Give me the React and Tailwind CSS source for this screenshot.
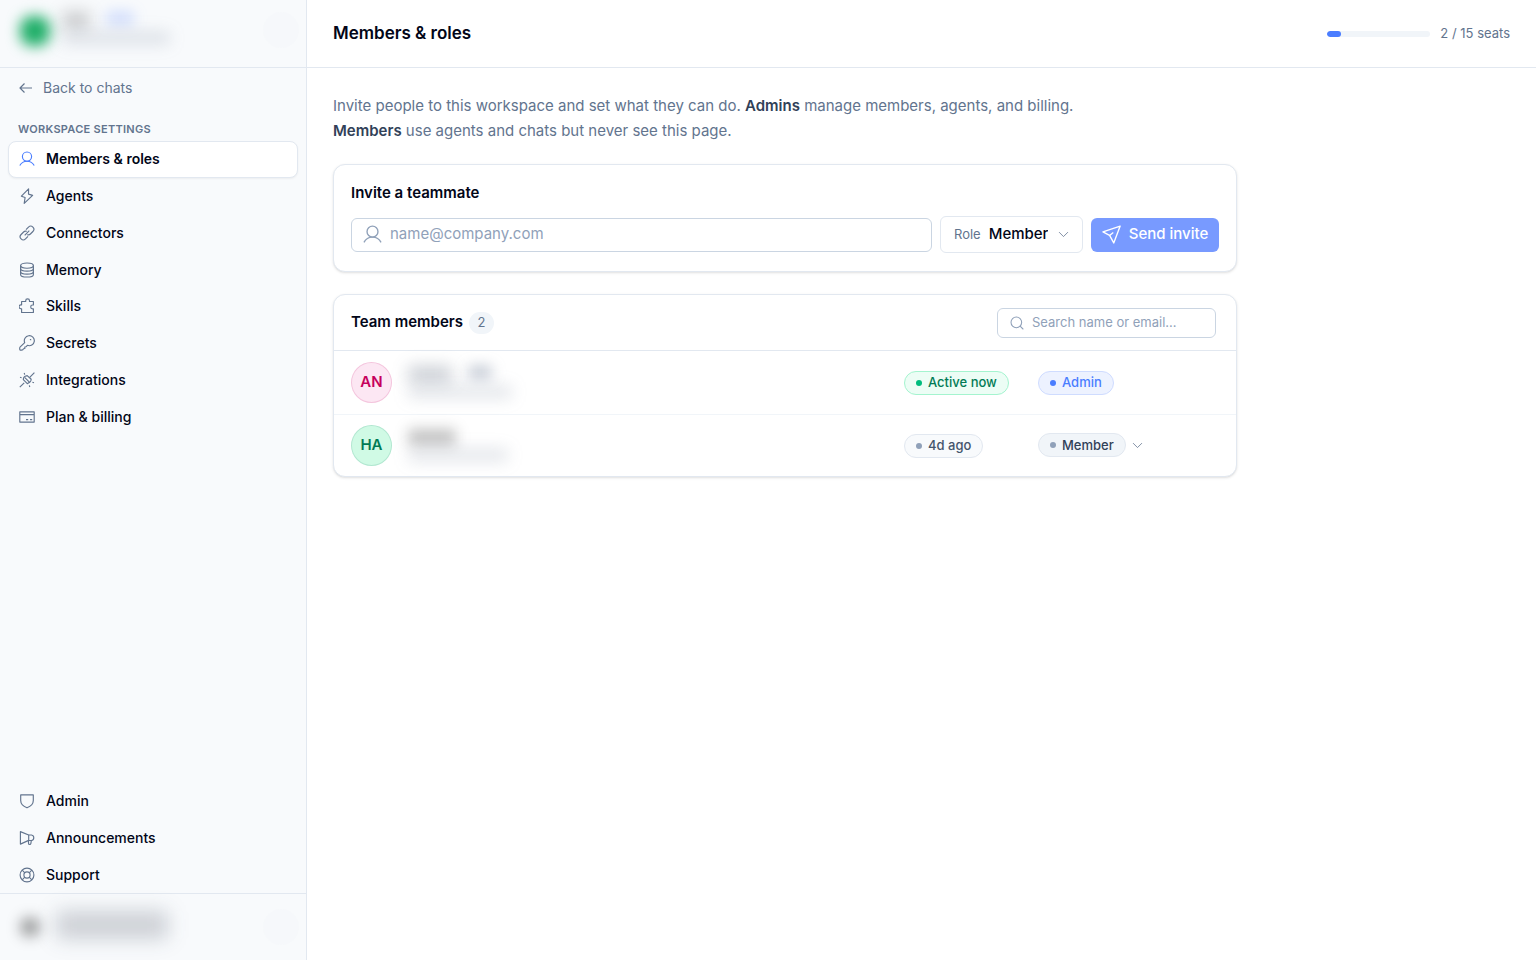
import { Search } from 'lucide-react';

function Icon({ children, className = 'size-4', strokeWidth = 1.15 }) {
  return (
    <svg
      viewBox="0 0 16 16"
      fill="none"
      stroke="currentColor"
      strokeWidth={strokeWidth}
      strokeLinejoin="round"
      aria-hidden="true"
      className={`shrink-0 ${className}`}
    >
      {children}
    </svg>
  );
}

const paths = {
  person: (
    <>
      <circle cx="8" cy="5.6" r="4.6" />
      <path d="M.8 14.600c1.400-2.800 4-4.400 7.200-4.400s5.800 1.600 7.200 4.400" />
    </>
  ),
  bolt: <path d="M9.600.8 2.400 8.200l3.700 1.300L5.200 15.400 13.600 7.400 9.500 6.100 9.600.8Z" />,
  link: (
    <>
      <path d="m7 4.600 2.500-2.500a3.100 3.100 0 0 1 4.400 4.400l-2.500 2.500c-.9.9-2.100 1-3.100.6" />
      <path d="M9 11.400l-2.500 2.500a3.100 3.100 0 0 1-4.400-4.400L4.600 7c.9-.9 2.100-1 3.100-.6" />
      <path d="m5.700 10.300 4.600-4.600" />
    </>
  ),
  database: (
    <>
      <ellipse cx="8" cy="3.600" rx="6.400" ry="2.600" />
      <path d="M1.600 3.600v8.800c0 1.400 2.800 2.600 6.400 2.600s6.400-1.200 6.400-2.600V3.600" />
      <path d="M1.600 6.500c0 1.400 2.800 2.600 6.400 2.600s6.400-1.200 6.400-2.600M1.600 9.500c0 1.400 2.800 2.600 6.400 2.600s6.400-1.200 6.400-2.600" />
    </>
  ),
  puzzle: (
    <path d="M2.600 14.500h11.800v-3.700h-.8a1.900 1.900 0 0 1 0-3.800h.8V3.500h-3.900v-.7a1.900 1.900 0 0 0-3.800 0v.7H2.600v3.300H2A1.900 1.900 0 0 0 2 10.700h.6v3.800Z" />
  ),
  key: (
    <>
      <path d="M5.700 7.600A5 5 0 1 1 8.400 10.300L6.900 11.800 5.800 12v1.500l-1.300.2-.8 1.200c-.4.400-2.500.3-2.800-.1s-.3-2.300.1-2.700L5.700 7.600Z" />
      <path d="M10.900 4.500h.8v.8" />
    </>
  ),
  integration: (
    <>
      <path d="m4.300 7.700 4 4 1.800-1.100a3.200 3.200 0 0 0 1.700-1.700l.4-1.700-4-3.600-2 .6a3.200 3.200 0 0 0-1.600 1.700l-.3 1.800Z" />
      <path d="m.8 15.200 4.400-4.400M5.600 5.400l5 5M10.700 5.300 15.400.6M5.700 2.600 5.200 1M2.600 5.700 1 5.200M10.300 13.400l.5 1.600M13.400 10.300l1.600.5" />
    </>
  ),
  card: <path d="M.8 2.900h14.400v10.200H.8zM.8 5.600h14.400M7 10.600h2.200M11 10.600h2.200" />,
  shield: <path d="M1.700 1.900h12.600v5.600c0 3.300-2.300 5.700-6.300 7.300-4-1.600-6.300-4-6.300-7.300V1.900Z" />,
  megaphone: (
    <>
      <path d="M1.400 1.600v12.500l8.300-3.700V5L1.400 1.600Z" />
      <path d="M9.700 5h2.800a2.800 2.800 0 0 1 0 5.500H9.700M9.500 10.600v2.600c0 .8.500 1.300 1.200 1.300s1.100-.5 1.200-1.200l.4-2.800" />
    </>
  ),
  lifebuoy: (
    <>
      <circle cx="8" cy="8" r="6.900" />
      <circle cx="8" cy="8" r="3.100" />
      <path d="m3.200 3.200 2.600 2.600m4.400 4.400 2.600 2.600m0-9.600-2.600 2.600m-4.400 4.400-2.600 2.600" />
    </>
  ),
  back: <path d="M14 8H2M6.500 3.500 2 8l4.500 4.500" />,
  chevron: <path d="m1.500 4.500 6.500 6.500 6.500-6.500" />,
  send: (
    <>
      <path d="M15.300.9.8 5.800l5.600 3 3.500 6.300L15.300.9Z" />
      <path d="m6.400 8.800 3.100-2.500" />
    </>
  ),
};

const settingsNav = [
  { label: 'Members & roles', icon: 'person', active: true },
  { label: 'Agents', icon: 'bolt' },
  { label: 'Connectors', icon: 'link' },
  { label: 'Memory', icon: 'database' },
  { label: 'Skills', icon: 'puzzle' },
  { label: 'Secrets', icon: 'key' },
  { label: 'Integrations', icon: 'integration' },
  { label: 'Plan & billing', icon: 'card' },
];

const footerNav = [
  { label: 'Admin', icon: 'shield' },
  { label: 'Announcements', icon: 'megaphone' },
  { label: 'Support', icon: 'lifebuoy' },
];

function NavItem({ label, icon, active }) {
  return (
    <li className="flex">
      <a
        href="#"
        aria-current={active ? 'page' : undefined}
        className={`flex flex-1 items-center gap-[11px] rounded-lg border px-[10px] text-sm text-slate-950 ${
          active
            ? 'border-slate-200 bg-white font-semibold shadow-xs'
            : 'border-transparent font-medium'
        }`}
      >
        <Icon className={active ? 'size-4 text-[#4a7dff]' : 'size-4 text-slate-500'}>{paths[icon]}</Icon>
        {label}
      </a>
    </li>
  );
}

function Sidebar() {
  return (
    <aside className="flex w-[307px] shrink-0 flex-col border-r border-slate-200 bg-slate-50">
      <div className="flex h-17 shrink-0 items-start justify-between overflow-hidden border-b border-slate-200 pt-3 pr-[7px] pl-5">
        <div className="flex gap-3">
          <div className="mt-1 size-[30px] rounded-xl bg-[#1fae68] blur-[7px]" />
          <div className="space-y-1">
            <div className="flex gap-4">
              <div className="h-4 w-7 rounded bg-neutral-950/20 blur-[8px]" />
              <div className="h-3 w-7 rounded bg-[#4a7dff]/25 blur-[7px]" />
            </div>
            <div className="h-3 w-27 rounded bg-slate-500/20 blur-[8px]" />
          </div>
        </div>
        <div className="size-9 rounded-full bg-slate-100/30" />
      </div>

      <a href="#" className="mt-2 flex h-6 items-center gap-[9px] px-[18px] text-sm text-slate-500">
        <Icon>{paths.back}</Icon>
        Back to chats
      </a>

      <nav aria-label="Workspace settings" className="mt-5 px-2">
        <h2 className="px-[10px] text-[11px] leading-[18px] font-semibold tracking-wide text-slate-500 uppercase">
          Workspace settings
        </h2>
        <ul className="mt-[3px] grid h-[294px] grid-rows-8">
          {settingsNav.map((item) => (
            <NavItem key={item.label} {...item} />
          ))}
        </ul>
      </nav>

      <ul className="mt-auto grid h-[110px] grid-rows-3 px-2">
        {footerNav.map((item) => (
          <NavItem key={item.label} {...item} />
        ))}
      </ul>

      <div className="flex h-[67px] shrink-0 items-center justify-between border-t border-slate-200 pr-[7px] pl-5">
        <div className="flex items-center gap-4">
          <div className="size-5 rounded-full bg-neutral-950/40 blur-[7px]" />
          <div className="mb-1 h-7 w-28 rounded bg-slate-800/20 blur-[10px]" />
        </div>
        <div className="size-9 rounded-full bg-slate-100/30" />
      </div>
    </aside>
  );
}

function Pill({ className, dot, children }) {
  return (
    <span
      className={`inline-flex h-6 items-center gap-[6px] rounded-full border px-[11px] align-middle text-[13px] font-medium ${className}`}
    >
      <span className={`size-[6px] rounded-full ${dot}`} />
      {children}
    </span>
  );
}

function InviteCard() {
  return (
    <section className="rounded-xl border border-slate-200 bg-white px-[17px] pt-4 pb-[18px] shadow-sm">
      <h2 className="text-[15px] leading-6 font-semibold text-slate-950">Invite a teammate</h2>
      <form className="mt-[11px] flex items-center gap-2" onSubmit={(e) => e.preventDefault()}>
        <label className="flex h-[34px] flex-1 items-center gap-2 rounded-md border border-slate-300 px-[11px] text-slate-400">
          <Icon className="size-[19px]">{paths.person}</Icon>
          <input
            type="email"
            aria-label="Email"
            placeholder="name@company.com"
            className="min-w-0 flex-1 bg-transparent text-[15px] text-slate-950 outline-none placeholder:text-slate-400"
          />
        </label>
        <label className="flex h-[37px] w-[143px] items-center rounded-md border border-slate-200 px-[13px] text-[13px] text-slate-500">
          Role
          <select className="ml-2 field-sizing-content appearance-none bg-transparent text-[15px] font-medium text-slate-950 outline-none">
            <option>Member</option>
          </select>
          <Icon className="ml-auto size-[11px]">{paths.chevron}</Icon>
        </label>
        <button
          type="submit"
          className="flex h-[34px] w-32 items-center justify-center gap-2 rounded-md bg-[#789aff] text-[15px] font-medium whitespace-nowrap text-white"
        >
          <Icon className="size-[19px]">{paths.send}</Icon>
          Send invite
        </button>
      </form>
    </section>
  );
}

function MembersCard() {
  return (
    <section className="mt-[22px] overflow-hidden rounded-xl border border-slate-200 bg-white shadow-sm">
      <header className="flex h-14 items-center border-b border-slate-200 pr-5 pl-[17px]">
        <h2 className="text-[15px] font-semibold text-slate-950">Team members</h2>
        <span className="ml-[6px] flex h-[22px] w-[25px] items-center justify-center rounded-full bg-slate-100 text-[13px] text-slate-500">
          2
        </span>
        <label className="ml-auto flex h-[30px] w-[219px] items-center gap-[7px] rounded-md border border-slate-300 px-[11px] text-slate-400">
          <Search className="size-4 shrink-0" strokeWidth={1.6} />
          <input
            type="search"
            aria-label="Search members"
            placeholder="Search name or email…"
            className="min-w-0 flex-1 bg-transparent text-[13px] text-slate-950 outline-none placeholder:text-slate-400"
          />
        </label>
      </header>
      <table aria-label="Team members" className="w-full table-fixed">
        <colgroup>
          <col />
          <col className="w-[134px]" />
          <col className="w-[198px]" />
        </colgroup>
        <tbody>
          <tr className="h-[63px] border-b border-slate-100">
            <td className="pl-[17px]">
              <div className="flex items-center gap-4">
                <span className="flex size-[41px] items-center justify-center rounded-full border border-pink-700/15 bg-pink-100 text-[15px] font-semibold text-pink-700">
                  AN
                </span>
                <div className="space-y-1">
                  <div className="flex gap-4">
                    <div className="h-4 w-11 rounded bg-slate-700/25 blur-[8px]" />
                    <div className="h-3 w-6 rounded bg-slate-500/40 blur-[7px]" />
                  </div>
                  <div className="h-3 w-26 rounded bg-slate-500/20 blur-[8px]" />
                </div>
              </div>
            </td>
            <td>
              <Pill className="border-emerald-200 bg-emerald-50 text-emerald-700" dot="bg-emerald-500">
                Active now
              </Pill>
            </td>
            <td>
              <Pill className="border-[#cfdcff] bg-[#edf2ff] text-[#4a7dff]" dot="bg-[#4a7dff]">
                Admin
              </Pill>
            </td>
          </tr>
          <tr className="h-[62px]">
            <td className="pl-[17px]">
              <div className="flex items-center gap-4">
                <span className="flex size-[41px] items-center justify-center rounded-full border border-emerald-700/15 bg-emerald-100 text-[15px] font-semibold text-emerald-700">
                  HA
                </span>
                <div className="space-y-1">
                  <div className="h-4 w-12 rounded bg-neutral-950/25 blur-[7px]" />
                  <div className="h-3 w-25 rounded bg-slate-500/20 blur-[8px]" />
                </div>
              </div>
            </td>
            <td>
              <Pill className="border-slate-200 bg-slate-50 text-slate-600" dot="bg-slate-400">
                4d ago
              </Pill>
            </td>
            <td>
              <label className="flex items-center gap-[6px] text-slate-500">
                <Pill className="border-slate-200 bg-slate-100 text-slate-700" dot="bg-slate-400">
                  <select aria-label="Role" className="field-sizing-content appearance-none bg-transparent outline-none">
                    <option>Member</option>
                  </select>
                </Pill>
                <Icon className="size-[11px]">{paths.chevron}</Icon>
              </label>
            </td>
          </tr>
        </tbody>
      </table>
    </section>
  );
}

export default function App() {
  return (
    <div className="flex min-h-screen bg-white font-[Inter,'Liberation_Sans',sans-serif] text-slate-950">
      <Sidebar />
      <main className="min-w-0 flex-1">
        <header className="flex h-17 items-center justify-between border-b border-slate-200 px-[26px]">
          <h1 className="text-[17px] font-semibold">Members &amp; roles</h1>
          <div className="flex items-center gap-[10px] text-[13px] text-slate-500">
            <div className="h-[6px] w-[103px] overflow-hidden rounded-full bg-slate-100">
              <div className="h-full rounded-full bg-[#4a7dff]" style={{ width: `${(2 / 15) * 100}%` }} />
            </div>
            2 / 15 seats
          </div>
        </header>
        <div className="max-w-[956px] px-[26px] pt-[25px]">
          <p className="mb-[21px] max-w-[770px] text-[15px] leading-[25px] text-slate-500">
            Invite people to this workspace and set what they can do.{' '}
            <strong className="font-semibold text-slate-700">Admins</strong> manage members, agents, and billing.{' '}
            <strong className="font-semibold text-slate-700">Members</strong> use agents and chats but never see this page.
          </p>
          <InviteCard />
          <MembersCard />
        </div>
      </main>
    </div>
  );
}
